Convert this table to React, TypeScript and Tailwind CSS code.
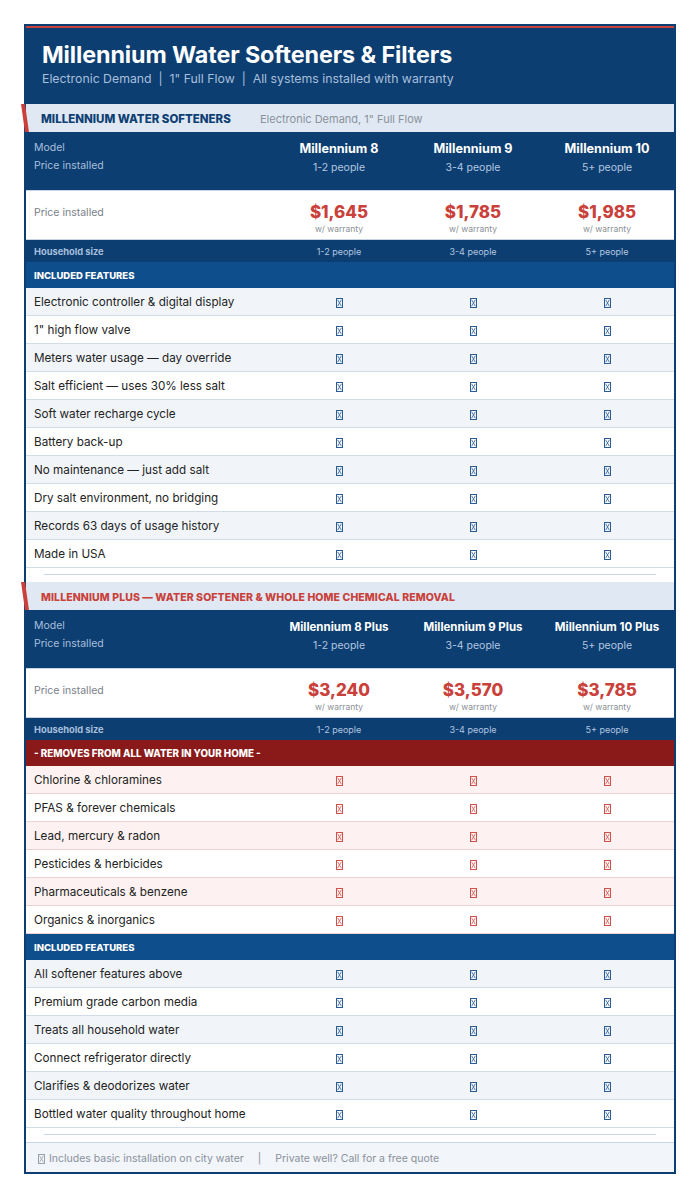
import React from "react";

const FONT = { fontFamily: "Inter, 'Open Sans', 'Liberation Sans', sans-serif" };

function Tofu({ color }: { color: string }) {
  return (
    <svg width="7" height="10" viewBox="0 0 7 10" className="inline-block">
      <rect x="0.5" y="0.5" width="6" height="9" fill="none" stroke={color} strokeWidth="1" />
      <path d="M1.6 1.8 L5.4 8.2 M5.4 1.8 L1.6 8.2" stroke={color} strokeWidth="0.8" />
    </svg>
  );
}

type Model = { name: string; people: string; price: string };

function SectionBand({ title, sub, red }: { title: string; sub?: string; red?: boolean }) {
  return (
    <div className="relative h-[28px] bg-[#e0e8f3] flex items-center pt-[3px]">
      <div className="absolute left-[-3px] top-0 bottom-0 w-[4px] bg-[#c9413a] skew-x-[8deg]" />
      <div
        className={
          red
            ? "pl-[15px] text-[10.5px] font-extrabold text-[#c9413a] tracking-[0.1px]"
            : "pl-[15px] text-[11.5px] font-extrabold text-[#0e3f73] w-[234px]"
        }
      >
        {title}
      </div>
      {sub && <div className="text-[11px] text-[#8a929c]">{sub}</div>}
    </div>
  );
}

function HeadRows({ models, small }: { models: Model[]; small?: boolean }) {
  return (
    <>
      <div className="grid grid-cols-[246px_134px_134px_134px] h-[58px] bg-[#0c3e71]">
        <div className="pl-[8px] pt-[7px] text-[10.5px] text-[#a8bfdc]">
          <div className="leading-[18px]">Model</div>
          <div className="leading-[18px]">Price installed</div>
        </div>
        {models.map((m) => (
          <div key={m.name} className="pt-[7px] text-center">
            <div
              className={
                small
                  ? "leading-[20px] text-[11.5px] font-bold text-white"
                  : "leading-[20px] text-[12.6px] font-bold text-white"
              }
            >
              {m.name}
            </div>
            <div className="leading-[18px] text-[10.5px] text-[#b3c6e0]">{m.people}</div>
          </div>
        ))}
      </div>
      <div className="grid grid-cols-[246px_134px_134px_134px] h-[50px] bg-white border-t border-b border-[#c6d4e6]">
        <div className="pl-[8px] pt-[13px] leading-[18px] text-[10.5px] text-[#7a8089]">Price installed</div>
        {models.map((m) => (
          <div key={m.name} className="pt-[10px] text-center">
            <div className="leading-[22px] text-[17px] font-extrabold text-[#c9413a]">{m.price}</div>
            <div className="leading-[12px] text-[8.5px] text-[#8a8f96]">w/ warranty</div>
          </div>
        ))}
      </div>
      <div className="grid grid-cols-[246px_134px_134px_134px] h-[22px] bg-[#0c3e71] items-center pt-[2px]">
        <div className="pl-[8px] text-[9.3px] font-bold text-[#a8bfdc]">Household size</div>
        {models.map((m) => (
          <div key={m.name} className="text-center text-[9px] text-[#b3c6e0]">
            {m.people}
          </div>
        ))}
      </div>
    </>
  );
}

function Band({ text, red }: { text: string; red?: boolean }) {
  return (
    <div
      className={
        red
          ? "h-[26px] bg-[#8a1a1a] flex items-center pl-[8px] pt-[2px] text-[9.8px] font-extrabold text-white"
          : "h-[26px] bg-[#0f4e8c] flex items-center pl-[8px] pt-[2px] text-[9.5px] font-extrabold text-white"
      }
    >
      {text}
    </div>
  );
}

function Rows({ items, red }: { items: string[]; red?: boolean }) {
  return (
    <>
      {items.map((t, i) => (
        <div
          key={t}
          className={
            "grid grid-cols-[246px_134px_134px_134px] h-[28px] pt-[3px] items-center border-b " +
            (red
              ? i % 2 === 0
                ? "bg-[#fdf2f1] border-[#ecd2d2]"
                : "bg-white border-[#ecd2d2]"
              : i % 2 === 0
              ? "bg-[#f1f5fa] border-[#d2dce9]"
              : "bg-white border-[#d2dce9]")
          }
        >
          <div className="pl-[8px] text-[11.7px] text-[#232323]">{t}</div>
          {[0, 1, 2].map((k) => (
            <div key={k} className="flex justify-center">
              <Tofu color={red ? "#d0504a" : "#2a5c98"} />
            </div>
          ))}
        </div>
      ))}
    </>
  );
}

function Spacer() {
  return (
    <div className="h-[14px] bg-white pt-[6px]">
      <div className="mx-[18px] h-px bg-[#c8d5e5]" />
    </div>
  );
}

export default function App() {
  const m1: Model[] = [
    { name: "Millennium 8", people: "1-2 people", price: "$1,645" },
    { name: "Millennium 9", people: "3-4 people", price: "$1,785" },
    { name: "Millennium 10", people: "5+ people", price: "$1,985" },
  ];
  const m2: Model[] = [
    { name: "Millennium 8 Plus", people: "1-2 people", price: "$3,240" },
    { name: "Millennium 9 Plus", people: "3-4 people", price: "$3,570" },
    { name: "Millennium 10 Plus", people: "5+ people", price: "$3,785" },
  ];
  const f1 = [
    "Electronic controller & digital display",
    "1\" high flow valve",
    "Meters water usage — day override",
    "Salt efficient — uses 30% less salt",
    "Soft water recharge cycle",
    "Battery back-up",
    "No maintenance — just add salt",
    "Dry salt environment, no bridging",
    "Records 63 days of usage history",
    "Made in USA",
  ];
  const r2 = [
    "Chlorine & chloramines",
    "PFAS & forever chemicals",
    "Lead, mercury & radon",
    "Pesticides & herbicides",
    "Pharmaceuticals & benzene",
    "Organics & inorganics",
  ];
  const f2 = [
    "All softener features above",
    "Premium grade carbon media",
    "Treats all household water",
    "Connect refrigerator directly",
    "Clarifies & deodorizes water",
    "Bottled water quality throughout home",
  ];
  return (
    <div className="w-[700px] h-[1198px] bg-white pt-[24px] pl-[24px]" style={FONT}>
      <div className="w-[652px] border-2 border-[#0c3e71] bg-white">
        <div className="bg-[#0c3e71] border-t-2 border-[#c9413a] px-[16px] pt-[12px] pb-[16px]">
          <div className="text-[23.3px] leading-[30px] font-bold text-white tracking-[-0.1px]">
            Millennium Water Softeners &amp; Filters
          </div>
          <div className="text-[12.3px] leading-[18px] text-[#a8bfdc]">
            Electronic Demand&nbsp;&nbsp;|&nbsp;&nbsp;1" Full Flow&nbsp;&nbsp;|&nbsp;&nbsp;All systems installed with warranty
          </div>
        </div>
        <SectionBand title="MILLENNIUM WATER SOFTENERS" sub={'Electronic Demand, 1" Full Flow'} />
        <HeadRows models={m1} />
        <Band text="INCLUDED FEATURES" />
        <Rows items={f1} />
        <Spacer />
        <SectionBand title="MILLENNIUM PLUS — WATER SOFTENER & WHOLE HOME CHEMICAL REMOVAL" red />
        <HeadRows models={m2} small />
        <Band text="- REMOVES FROM ALL WATER IN YOUR HOME -" red />
        <Rows items={r2} red />
        <Band text="INCLUDED FEATURES" />
        <Rows items={f2} />
        <Spacer />
        <div className="h-[30px] bg-[#f2f5fa] border-t border-[#c8d5e5] flex items-center pl-[12px] pt-[3px] text-[10.5px] text-[#8a919b]">
          <Tofu color="#9aa1ab" />
          <span className="ml-[4px]">Includes basic installation on city water</span>
          <span className="mx-[14px]">|</span>
          <span>Private well? Call for a free quote</span>
        </div>
      </div>
    </div>
  );
}
